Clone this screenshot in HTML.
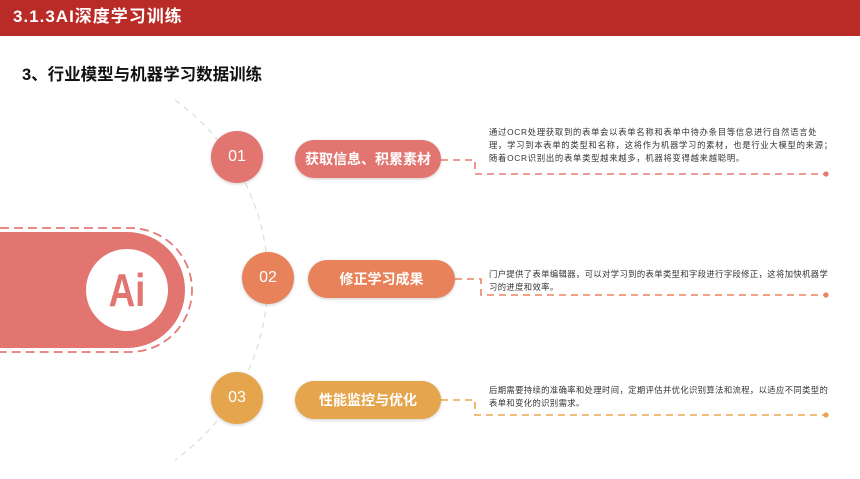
<!DOCTYPE html>
<html><head><meta charset="utf-8"><style>
html,body{margin:0;width:860px;height:479px;overflow:hidden}
body{background:#fff;font-family:"Liberation Sans","Noto Sans CJK SC",sans-serif;position:relative}
.hd{position:absolute;left:0;top:0;width:860px;height:36px;background:#b92b26;color:#fff;font-weight:bold;font-size:17px;line-height:34px;padding-left:13px;box-sizing:border-box;letter-spacing:1px}
.sub{position:absolute;left:22px;top:61px;font-weight:bold;font-size:16.5px;color:#111}
.c{position:absolute;width:52px;height:52px;border-radius:50%;color:#fff;font-size:16px;text-align:center;line-height:52px;box-shadow:0 1px 3px rgba(0,0,0,.2)}
.p{position:absolute;height:38px;border-radius:19px;color:#fff;font-weight:bold;font-size:14px;text-align:center;line-height:38px;box-shadow:0 1px 3px rgba(0,0,0,.2)}
.t{position:absolute;font-size:8.3px;line-height:13px;color:#333;width:345px;letter-spacing:0.75px}
.t2{letter-spacing:0.4px;width:346px}
</style></head><body>
<div class="hd">3.1.3AI深度学习训练</div>
<div class="sub">3、行业模型与机器学习数据训练</div>
<svg width="860" height="479" style="position:absolute;left:0;top:0">
<path d="M175 100 A221 221 0 0 1 175 460" fill="none" stroke="#ddd" stroke-width="1.2" stroke-dasharray="6 5"/>
<path d="M0 228 H130 A62 62 0 0 1 130 352 H0" fill="none" stroke="#e57b77" stroke-width="1.8" stroke-dasharray="9 5"/>
<path d="M0 232 H127 A58 58 0 0 1 127 348 H0 Z" fill="#e27570"/>
<circle cx="127" cy="290" r="41" fill="#fff"/>
<text x="127" y="306" text-anchor="middle" font-family="Liberation Sans" font-weight="bold" font-size="46" fill="#e27570" transform="translate(127 0) scale(0.8 1) translate(-127 0)">Ai</text>
<g fill="none" stroke-width="1.6" stroke-dasharray="7 5">
<path d="M441 160 H475 V174 H826" stroke="#e57b70"/>
<path d="M455 279 H481 V295 H826" stroke="#ea8560"/>
<path d="M441 400 H475 V415 H826" stroke="#e8a552"/>
</g>
<circle cx="826" cy="174" r="2.6" fill="#e57b70"/>
<circle cx="826" cy="295" r="2.6" fill="#ea8560"/>
<circle cx="826" cy="415" r="2.6" fill="#e8a552"/>
</svg>
<div class="c" style="left:211px;top:131px;background:#e27570">01</div>
<div class="c" style="left:242px;top:252px;background:#e8825a">02</div>
<div class="c" style="left:211px;top:372px;background:#e4a54c">03</div>
<div class="p" style="left:295px;top:140px;width:146px;background:#e27570">获取信息、积累素材</div>
<div class="p" style="left:308px;top:260px;width:147px;background:#e8825a">修正学习成果</div>
<div class="p" style="left:295px;top:381px;width:146px;background:#e4a54c">性能监控与优化</div>
<div class="t" style="left:489px;top:126px">通过OCR处理获取到的表单会以表单名称和表单中待办条目等信息进行自然语言处理，学习到本表单的类型和名称，这将作为机器学习的素材，也是行业大模型的来源；随着OCR识别出的表单类型越来越多，机器将变得越来越聪明。</div>
<div class="t t2" style="left:489px;top:268px">门户提供了表单编辑器，可以对学习到的表单类型和字段进行字段修正，这将加快机器学习的进度和效率。</div>
<div class="t t2" style="left:489px;top:384px">后期需要持续的准确率和处理时间，定期评估并优化识别算法和流程，以适应不同类型的表单和变化的识别需求。</div>
</body></html>
